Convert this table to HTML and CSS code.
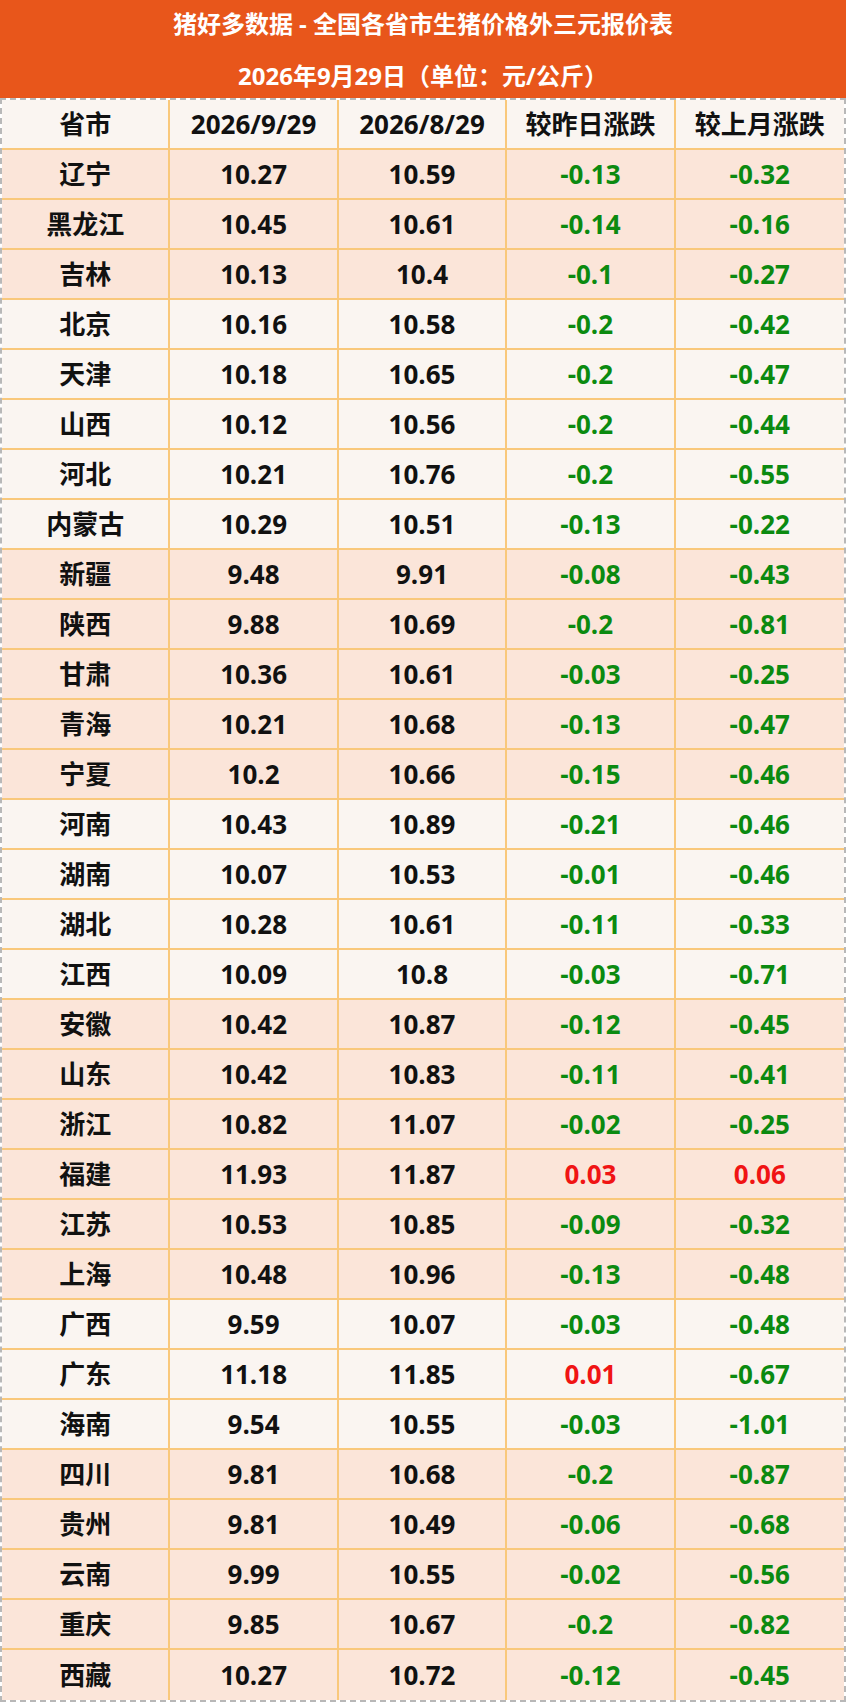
FILE: index.html
```html
<!DOCTYPE html>
<html lang="zh-CN">
<head>
<meta charset="utf-8">
<title>猪好多数据</title>
<link rel="stylesheet" href="styles.css">
</head>
<body>
<div class="page">
  <div class="banner">
    <div class="banner-line">猪好多数据 - 全国各省市生猪价格外三元报价表</div>
    <div class="banner-line">2026年9月29日（单位：元/公斤）</div>
  </div>
  <div class="grid">
    <div class="row head"><div class="cell">省市</div><div class="cell">2026/9/29</div><div class="cell">2026/8/29</div><div class="cell">较昨日涨跌</div><div class="cell">较上月涨跌</div></div>
    <div class="row peach"><div class="cell">辽宁</div><div class="cell">10.27</div><div class="cell">10.59</div><div class="cell down">-0.13</div><div class="cell down">-0.32</div></div>
    <div class="row peach"><div class="cell">黑龙江</div><div class="cell">10.45</div><div class="cell">10.61</div><div class="cell down">-0.14</div><div class="cell down">-0.16</div></div>
    <div class="row peach"><div class="cell">吉林</div><div class="cell">10.13</div><div class="cell">10.4</div><div class="cell down">-0.1</div><div class="cell down">-0.27</div></div>
    <div class="row light"><div class="cell">北京</div><div class="cell">10.16</div><div class="cell">10.58</div><div class="cell down">-0.2</div><div class="cell down">-0.42</div></div>
    <div class="row light"><div class="cell">天津</div><div class="cell">10.18</div><div class="cell">10.65</div><div class="cell down">-0.2</div><div class="cell down">-0.47</div></div>
    <div class="row light"><div class="cell">山西</div><div class="cell">10.12</div><div class="cell">10.56</div><div class="cell down">-0.2</div><div class="cell down">-0.44</div></div>
    <div class="row light"><div class="cell">河北</div><div class="cell">10.21</div><div class="cell">10.76</div><div class="cell down">-0.2</div><div class="cell down">-0.55</div></div>
    <div class="row light"><div class="cell">内蒙古</div><div class="cell">10.29</div><div class="cell">10.51</div><div class="cell down">-0.13</div><div class="cell down">-0.22</div></div>
    <div class="row peach"><div class="cell">新疆</div><div class="cell">9.48</div><div class="cell">9.91</div><div class="cell down">-0.08</div><div class="cell down">-0.43</div></div>
    <div class="row peach"><div class="cell">陕西</div><div class="cell">9.88</div><div class="cell">10.69</div><div class="cell down">-0.2</div><div class="cell down">-0.81</div></div>
    <div class="row peach"><div class="cell">甘肃</div><div class="cell">10.36</div><div class="cell">10.61</div><div class="cell down">-0.03</div><div class="cell down">-0.25</div></div>
    <div class="row peach"><div class="cell">青海</div><div class="cell">10.21</div><div class="cell">10.68</div><div class="cell down">-0.13</div><div class="cell down">-0.47</div></div>
    <div class="row peach"><div class="cell">宁夏</div><div class="cell">10.2</div><div class="cell">10.66</div><div class="cell down">-0.15</div><div class="cell down">-0.46</div></div>
    <div class="row light"><div class="cell">河南</div><div class="cell">10.43</div><div class="cell">10.89</div><div class="cell down">-0.21</div><div class="cell down">-0.46</div></div>
    <div class="row light"><div class="cell">湖南</div><div class="cell">10.07</div><div class="cell">10.53</div><div class="cell down">-0.01</div><div class="cell down">-0.46</div></div>
    <div class="row light"><div class="cell">湖北</div><div class="cell">10.28</div><div class="cell">10.61</div><div class="cell down">-0.11</div><div class="cell down">-0.33</div></div>
    <div class="row light"><div class="cell">江西</div><div class="cell">10.09</div><div class="cell">10.8</div><div class="cell down">-0.03</div><div class="cell down">-0.71</div></div>
    <div class="row peach"><div class="cell">安徽</div><div class="cell">10.42</div><div class="cell">10.87</div><div class="cell down">-0.12</div><div class="cell down">-0.45</div></div>
    <div class="row peach"><div class="cell">山东</div><div class="cell">10.42</div><div class="cell">10.83</div><div class="cell down">-0.11</div><div class="cell down">-0.41</div></div>
    <div class="row peach"><div class="cell">浙江</div><div class="cell">10.82</div><div class="cell">11.07</div><div class="cell down">-0.02</div><div class="cell down">-0.25</div></div>
    <div class="row peach"><div class="cell">福建</div><div class="cell">11.93</div><div class="cell">11.87</div><div class="cell up">0.03</div><div class="cell up">0.06</div></div>
    <div class="row peach"><div class="cell">江苏</div><div class="cell">10.53</div><div class="cell">10.85</div><div class="cell down">-0.09</div><div class="cell down">-0.32</div></div>
    <div class="row peach"><div class="cell">上海</div><div class="cell">10.48</div><div class="cell">10.96</div><div class="cell down">-0.13</div><div class="cell down">-0.48</div></div>
    <div class="row light"><div class="cell">广西</div><div class="cell">9.59</div><div class="cell">10.07</div><div class="cell down">-0.03</div><div class="cell down">-0.48</div></div>
    <div class="row light"><div class="cell">广东</div><div class="cell">11.18</div><div class="cell">11.85</div><div class="cell up">0.01</div><div class="cell down">-0.67</div></div>
    <div class="row light"><div class="cell">海南</div><div class="cell">9.54</div><div class="cell">10.55</div><div class="cell down">-0.03</div><div class="cell down">-1.01</div></div>
    <div class="row peach"><div class="cell">四川</div><div class="cell">9.81</div><div class="cell">10.68</div><div class="cell down">-0.2</div><div class="cell down">-0.87</div></div>
    <div class="row peach"><div class="cell">贵州</div><div class="cell">9.81</div><div class="cell">10.49</div><div class="cell down">-0.06</div><div class="cell down">-0.68</div></div>
    <div class="row peach"><div class="cell">云南</div><div class="cell">9.99</div><div class="cell">10.55</div><div class="cell down">-0.02</div><div class="cell down">-0.56</div></div>
    <div class="row peach"><div class="cell">重庆</div><div class="cell">9.85</div><div class="cell">10.67</div><div class="cell down">-0.2</div><div class="cell down">-0.82</div></div>
    <div class="row peach last"><div class="cell">西藏</div><div class="cell">10.27</div><div class="cell">10.72</div><div class="cell down">-0.12</div><div class="cell down">-0.45</div></div>
  </div>
</div>
</body>
</html>
```

FILE: styles.css
```css
* { box-sizing: border-box; }
html, body { margin: 0; padding: 0; background: #ffffff; }
body {
  font-family: "Open Sans", "Noto Sans CJK SC", sans-serif;
  font-weight: 700;
  font-size: 26px;
  color: #111111;
}
.page { width: 846px; }
.banner {
  background: #e8561b;
  color: #ffffff;
  height: 98px;
  font-size: 24px;
  text-align: center;
  display: flex;
  flex-direction: column;
  gap: 4px;
}
.banner-line {
  height: 48px;
  line-height: 48px;
}
.grid {
  border: 2px dashed #b8b8b8;
  display: flex;
  flex-direction: column;
}
.row {
  display: grid;
  grid-template-columns: repeat(5, 1fr);
  height: 50px;
}
.row.head { background: #faf5f1; }
.row.light { background: #faf5f1; }
.row.peach { background: #fbe5d9; }
.cell {
  border-right: 2px solid #f9c87b;
  border-bottom: 2px solid #f9c87b;
  text-align: center;
  line-height: 48px;
  white-space: nowrap;
}
.cell:last-child { border-right: none; }
.row.last .cell { border-bottom: none; line-height: 50px; }
.down { color: #0b8a10; }
.up { color: #f01414; }
```
